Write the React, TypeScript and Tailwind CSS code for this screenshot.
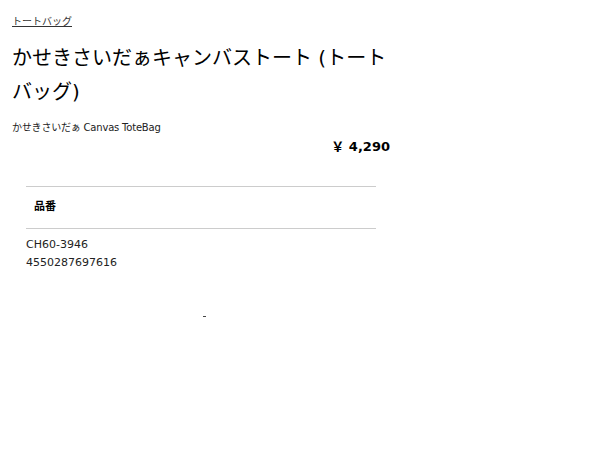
const font = { fontFamily: '"DejaVu Sans", "Noto Sans CJK JP", sans-serif' };

export default function App() {
  return (
    <div className="min-h-[450px] w-[600px] bg-white text-black" style={font}>
      <div className="w-[378px] ml-[12px] pt-[8px]">
        {/* Breadcrumb */}
        <a href="#" className="text-[10px] leading-[14px] text-[#333] underline">
          トートバッグ
        </a>

        {/* Title */}
        <h1 className="mt-[9px] text-[20px] leading-[34px] font-normal">
          かせきさいだぁキャンバストート (トートバッグ)
        </h1>

        <p className="mt-[12px] text-[10px] leading-[14px] tracking-[-0.2px] text-[#222]">
          かせきさいだぁ Canvas ToteBag
        </p>

        <p className="mt-[2px] text-right text-[13px] leading-[20px] font-bold">￥ 4,290</p>

        {/* Spec table */}
        <div className="mx-[14px] mt-[29px]">
          <div className="border-y border-[#ccc] h-[43px] flex items-center px-[8px]">
            <span className="text-[11px] font-bold">品番</span>
          </div>
          <div className="pt-[7px] text-[11px] leading-[18px] text-[#222]">
            <div>CH60-3946</div>
            <div>4550287697616</div>
          </div>
        </div>

        <div className="ml-[191px] mt-[44px] h-[1px] w-[3px] bg-[#444]" />
      </div>
    </div>
  );
}
